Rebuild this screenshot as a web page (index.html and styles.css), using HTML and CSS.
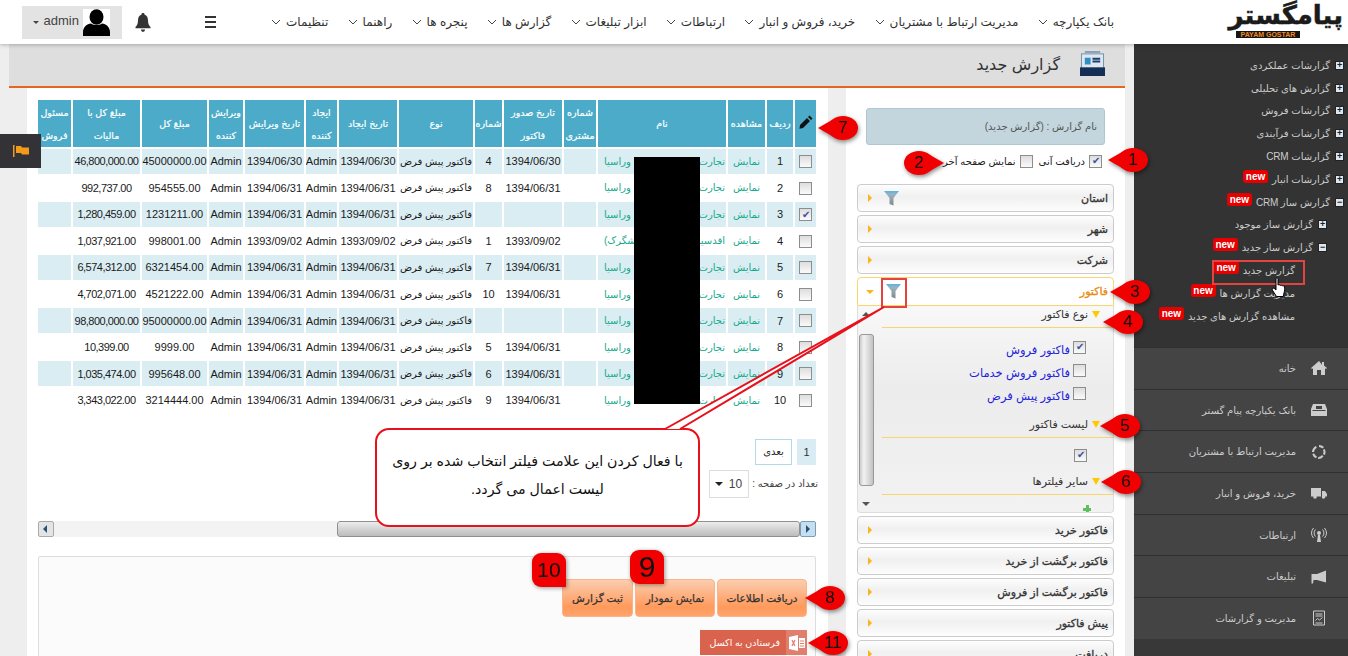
FILE: index.html
```html
<!DOCTYPE html>
<html lang="fa" dir="rtl">
<head>
    <meta charset="UTF-8">
    <title>گزارش جدید</title>
    <link rel="stylesheet" href="styles.css">
</head>
<body>
    <header class="topbar">
        <div class="logo">
            <span class="logo-fa">پیامگستر</span>
            <span class="logo-en">PAYAM GOSTAR</span>
        </div>
        <nav class="nav">
            <a>بانک یکپارچه<svg viewBox="0 0 10 6"><path d="M1 1l4 4 4-4"/></svg></a>
            <a>مدیریت ارتباط با مشتریان<svg viewBox="0 0 10 6"><path d="M1 1l4 4 4-4"/></svg></a>
            <a>خرید، فروش و انبار<svg viewBox="0 0 10 6"><path d="M1 1l4 4 4-4"/></svg></a>
            <a>ارتباطات<svg viewBox="0 0 10 6"><path d="M1 1l4 4 4-4"/></svg></a>
            <a>ابزار تبلیغات<svg viewBox="0 0 10 6"><path d="M1 1l4 4 4-4"/></svg></a>
            <a>گزارش ها<svg viewBox="0 0 10 6"><path d="M1 1l4 4 4-4"/></svg></a>
            <a>پنجره ها<svg viewBox="0 0 10 6"><path d="M1 1l4 4 4-4"/></svg></a>
            <a>راهنما<svg viewBox="0 0 10 6"><path d="M1 1l4 4 4-4"/></svg></a>
            <a>تنظیمات<svg viewBox="0 0 10 6"><path d="M1 1l4 4 4-4"/></svg></a>
        </nav>
        <div class="burger"><i></i><i></i><i></i></div>
        <svg class="bell" viewBox="0 0 16 19"><path d="M8 0c1 0 1.600.7 1.600 1.700 2.400.8 3.400 3 3.400 5.500 0 3.300.8 5 2.500 6.800v1.300H.5V14C2.200 12.200 3 10.500 3 7.200c0-2.500 1-4.700 3.400-5.500C6.400.7 7 0 8 0z"/><path d="M6 16.500h4c0 1.400-.9 2.300-2 2.300s-2-.9-2-2.300z"/></svg>
        <div class="user">
            <svg class="avatar" viewBox="0 0 27 27"><rect width="27" height="27" fill="#fff"/><ellipse cx="13.500" cy="8" rx="7" ry="7.800"/><path d="M0 27v-4c0-5 4-8 8-8.500 3 2 8 2 11 0 4 .5 8 3.500 8 8.500v4z"/></svg>
            <span class="user-name" dir="ltr">admin</span>
            <i class="caret"></i>
        </div>
    </header>

    <div class="layout">
        <aside class="sidebar">
            <ul class="tree">
                <li><i class="node">+</i>گزارشات عملکردی</li>
                <li><i class="node">+</i>گزارش های تحلیلی</li>
                <li><i class="node">+</i>گزارشات فروش</li>
                <li><i class="node">+</i>گزارشات فرآیندی</li>
                <li><i class="node">+</i>گزارشات CRM</li>
                <li><i class="node">+</i>گزارشات انبار<b class="new">new</b></li>
                <li><i class="node">−</i>گزارش ساز CRM<b class="new">new</b></li>
                <li class="lvl2"><i class="node">+</i>گزارش ساز موجود</li>
                <li class="lvl2"><i class="node">−</i>گزارش ساز جدید<b class="new">new</b></li>
                <li class="lvl3">گزارش جدید<b class="new">new</b></li>
                <li class="lvl3">مدیریت گزارش ها<b class="new">new</b></li>
                <li class="lvl3">مشاهده گزارش های جدید<b class="new">new</b></li>
            </ul>
            <ul class="menu">
                <li><svg viewBox="0 0 16 16"><path d="M8 1L0 8l1 1 1-.8V15h4v-5h4v5h4V8.200l1 .8 1-1-3-2.600V2h-2v2.700z"/></svg>خانه</li>
                <li><svg viewBox="0 0 16 16"><path d="M2 2h12l2 5v7H0V7zM1.500 8v1h13V8z"/><rect x="5" y="4" width="6" height="3" fill="#444"/></svg>بانک یکپارچه پیام گستر</li>
                <li><svg viewBox="0 0 16 16"><path d="M8 1a7 7 0 0 1 5 2l-1.500 1.500A5 5 0 0 0 8 3zM13.800 5A7 7 0 0 1 14 11l-2-.8a5 5 0 0 0 0-4.400zM12.500 12.500A7 7 0 0 1 7 15l.3-2a5 5 0 0 0 3.700-2zM5 14.300A7 7 0 0 1 1.200 10l2-.6a5 5 0 0 0 2.700 3zM1 8a7 7 0 0 1 4-6l.8 1.800A5 5 0 0 0 3 8z"/></svg>مدیریت ارتباط با مشتریان</li>
                <li><svg viewBox="0 0 16 16"><path d="M0 3h10v8.500H0zM11 6h3l2 3v2.500h-5z"/><circle cx="4" cy="12" r="1.800"/><circle cx="12.500" cy="12" r="1.800"/></svg>خرید، فروش و انبار</li>
                <li><svg viewBox="0 0 16 16"><circle cx="8" cy="6" r="2"/><path d="M7 8h2l1 7H6z"/><path class="line" d="M4.500 2.500a5 5 0 0 0 0 7M11.500 2.500a5 5 0 0 1 0 7M2.500 1a8 8 0 0 0 0 10M13.500 1a8 8 0 0 1 0 10"/></svg>ارتباطات</li>
                <li><svg viewBox="0 0 16 16"><path d="M15 1.500v12L6 11H2.500L2 14.500H.5V5H6z"/></svg>تبلیغات</li>
                <li><svg viewBox="0 0 16 16"><path class="line" d="M2.500 1h11v14h-11zM4.500 4h7M4.500 6h7M4.500 10.500l2-2 2 1.500 3-2.500M4.500 13h7"/></svg>مدیریت و گزارشات</li>
            </ul>
        </aside>

        <main class="main">
            <div class="title">
                <svg viewBox="0 0 26 26"><rect x="5" y="0" width="16" height="2" fill="#8b9fb4"/><rect x="1.500" y="3" width="23" height="15" fill="#dfe8f0" stroke="#6d90ac"/><rect x="5" y="7" width="6" height="7" fill="#2f8fc4"/><path d="M13 8h8M13 11h8" stroke="#1c3f6b" stroke-width="2"/><rect x="0" y="17" width="26" height="9" fill="#142e56"/></svg>
                <h1>گزارش جدید</h1>
            </div>
            <div class="content">
                <section class="filters">
                    <div class="report-name">نام گزارش : (گزارش جدید)</div>
                    <div class="check-row">
                        <input type="checkbox" class="chk" checked><label>دریافت آنی</label>
                        <input type="checkbox" class="chk"><label>نمایش صفحه آخر</label>
                    </div>
                    <div class="acc">استان<svg class="funnel" viewBox="0 0 15 15"><use href="#funnel"/></svg><i class="arrow"></i></div>
                    <div class="acc">شهر<i class="arrow"></i></div>
                    <div class="acc">شرکت<i class="arrow"></i></div>
                    <div class="acc open">فاکتور<svg class="funnel" viewBox="0 0 15 15"><use href="#funnel"/></svg><i class="arrow"></i></div>
                    <div class="acc-body">
                        <div class="acc-inner">
                            <h3 class="sec">نوع فاکتور</h3>
                            <ul class="opts">
                                <li><input type="checkbox" class="chk" checked>فاکتور فروش</li>
                                <li><input type="checkbox" class="chk">فاکتور فروش خدمات</li>
                                <li><input type="checkbox" class="chk">فاکتور پیش فرض</li>
                            </ul>
                            <h3 class="sec">لیست فاکتور</h3>
                            <div class="list-check"><input type="checkbox" class="chk" checked></div>
                            <h3 class="sec">سایر فیلترها</h3>
                            <div class="plus"></div>
                        </div>
                        <div class="vscroll"><i class="up"></i><span class="vthumb"></span><i class="down"></i></div>
                    </div>
                    <div class="acc">فاکتور خرید<i class="arrow"></i></div>
                    <div class="acc">فاکتور برگشت از خرید<i class="arrow"></i></div>
                    <div class="acc">فاکتور برگشت از فروش<i class="arrow"></i></div>
                    <div class="acc">پیش فاکتور<i class="arrow"></i></div>
                    <div class="acc">دریافت<i class="arrow"></i></div>
                </section>

                <section class="report">
                    <div class="table-wrap">
                        <table class="grid">
                            <colgroup>
                                <col class="c21"><col class="c26"><col class="c37"><col class="c128"><col class="c32"><col class="c58"><col class="c27"><col class="c74"><col class="c58"><col class="c31"><col class="c59"><col class="c34"><col class="c65"><col class="c67"><col class="c33">
                            </colgroup>
                            <thead>
                                <tr>
                                    <th><svg class="pencil" viewBox="0 0 14 14"><path d="M10.500.5l3 3-1.500 1.500-3-3zM8 3l3 3-7 7-3.500.800L1 10z"/></svg></th>
                                    <th>ردیف</th><th>مشاهده</th><th>نام</th><th>شماره مشتری</th><th>تاریخ صدور فاکتور</th><th>شماره</th><th>نوع</th><th>تاریخ ایجاد</th><th>ایجاد کننده</th><th>تاریخ ویرایش</th><th>ویرایش کننده</th><th>مبلغ کل</th><th>مبلغ کل با<br>مالیات</th><th>مسئول فروش</th>
                                </tr>
                            </thead>
                            <tbody>
                                <tr><td><input type="checkbox" class="chk"></td><td>1</td><td class="link">نمایش</td><td class="link"><div class="name"><span>تجارت</span><span>وراسیا</span></div></td><td></td><td>1394/06/30</td><td>4</td><td class="kind">فاکتور پیش فرض</td><td>1394/06/30</td><td>Admin</td><td>1394/06/30</td><td>Admin</td><td>45000000.00</td><td class="tax">46,800,000.00</td><td></td></tr>
                                <tr><td><input type="checkbox" class="chk"></td><td>2</td><td class="link">نمایش</td><td class="link"><div class="name"><span>تجارت</span><span>وراسیا</span></div></td><td></td><td>1394/06/31</td><td>8</td><td class="kind">فاکتور پیش فرض</td><td>1394/06/31</td><td>Admin</td><td>1394/06/31</td><td>Admin</td><td>954555.00</td><td class="tax">992,737.00</td><td></td></tr>
                                <tr><td><input type="checkbox" class="chk" checked></td><td>3</td><td class="link">نمایش</td><td class="link"><div class="name"><span>تجارت</span><span>وراسیا</span></div></td><td></td><td></td><td></td><td class="kind">فاکتور پیش فرض</td><td>1394/06/31</td><td>Admin</td><td>1394/06/31</td><td>Admin</td><td>1231211.00</td><td class="tax">1,280,459.00</td><td></td></tr>
                                <tr><td><input type="checkbox" class="chk"></td><td>4</td><td class="link">نمایش</td><td class="link"><div class="name"><span>اقدسیه</span><span>لشگرک)</span></div></td><td></td><td>1393/09/02</td><td>1</td><td class="kind">فاکتور پیش فرض</td><td>1393/09/02</td><td>Admin</td><td>1393/09/02</td><td>Admin</td><td>998001.00</td><td class="tax">1,037,921.00</td><td></td></tr>
                                <tr><td><input type="checkbox" class="chk"></td><td>5</td><td class="link">نمایش</td><td class="link"><div class="name"><span>تجارت</span><span>وراسیا</span></div></td><td></td><td>1394/06/31</td><td>7</td><td class="kind">فاکتور پیش فرض</td><td>1394/06/31</td><td>Admin</td><td>1394/06/31</td><td>Admin</td><td>6321454.00</td><td class="tax">6,574,312.00</td><td></td></tr>
                                <tr><td><input type="checkbox" class="chk"></td><td>6</td><td class="link">نمایش</td><td class="link"><div class="name"><span>تجارت</span><span>وراسیا</span></div></td><td></td><td>1394/06/31</td><td>10</td><td class="kind">فاکتور پیش فرض</td><td>1394/06/31</td><td>Admin</td><td>1394/06/31</td><td>Admin</td><td>4521222.00</td><td class="tax">4,702,071.00</td><td></td></tr>
                                <tr><td><input type="checkbox" class="chk"></td><td>7</td><td class="link">نمایش</td><td class="link"><div class="name"><span>تجارت</span><span>وراسیا</span></div></td><td></td><td></td><td></td><td class="kind">فاکتور پیش فرض</td><td>1394/06/31</td><td>Admin</td><td>1394/06/31</td><td>Admin</td><td>95000000.00</td><td class="tax">98,800,000.00</td><td></td></tr>
                                <tr><td><input type="checkbox" class="chk"></td><td>8</td><td class="link">نمایش</td><td class="link"><div class="name"><span>تجارت</span><span>وراسیا</span></div></td><td></td><td>1394/06/31</td><td>5</td><td class="kind">فاکتور پیش فرض</td><td>1394/06/31</td><td>Admin</td><td>1394/06/31</td><td>Admin</td><td>9999.00</td><td class="tax">10,399.00</td><td></td></tr>
                                <tr><td><input type="checkbox" class="chk"></td><td>9</td><td class="link">نمایش</td><td class="link"><div class="name"><span>تجارت</span><span>وراسیا</span></div></td><td></td><td>1394/06/31</td><td>6</td><td class="kind">فاکتور پیش فرض</td><td>1394/06/31</td><td>Admin</td><td>1394/06/31</td><td>Admin</td><td>995648.00</td><td class="tax">1,035,474.00</td><td></td></tr>
                                <tr><td><input type="checkbox" class="chk"></td><td>10</td><td class="link">نمایش</td><td class="link"><div class="name"><span>تجارت</span><span>وراسیا</span></div></td><td></td><td>1394/06/31</td><td>9</td><td class="kind">فاکتور پیش فرض</td><td>1394/06/31</td><td>Admin</td><td>1394/06/31</td><td>Admin</td><td>3214444.00</td><td class="tax">3,343,022.00</td><td></td></tr>
                            </tbody>
                        </table>
                    </div>

                    <div class="pager">
                        <span class="page-num">1</span>
                        <span class="page-next">بعدی</span>
                    </div>
                    <div class="page-size">
                        <span>تعداد در صفحه :</span>
                        <div class="size-select"><span>10</span><i></i></div>
                    </div>

                    <div class="hscroll">
                        <span class="hbtn right"></span>
                        <span class="hthumb"></span>
                        <span class="htrack"></span>
                        <span class="hbtn left"></span>
                    </div>

                    <div class="actions">
                        <div class="btns">
                            <button>دریافت اطلاعات</button>
                            <button>نمایش نمودار</button>
                            <button>ثبت گزارش</button>
                        </div>
                        <div class="excel">
                            <span class="excel-ico"><svg viewBox="0 0 16 16"><path d="M0 2l9-2v16l-9-2zM10 3h6v10h-6z" fill="#fff"/><path d="M3 5l3 6M6 5l-3 6" stroke="#e07f6d" stroke-width="1.300"/><path d="M11 6h4M11 8.500h4M11 11h4" stroke="#e07f6d"/></svg></span>
                            <span class="excel-text">فرستادن به اکسل</span>
                        </div>
                    </div>
                </section>
            </div>
        </main>
    </div>

    <svg class="defs" width="0" height="0">
        <defs>
            <linearGradient id="fg" x1="0" y1="0" x2="0" y2="1"><stop offset="0" stop-color="#55b4e6"/><stop offset=".25" stop-color="#9fb2bd"/><stop offset="1" stop-color="#7f8a90"/></linearGradient>
            <path id="funnel" d="M0 0h15L9.500 7v7.500l-4-1.500V7z" fill="url(#fg)"/>
        </defs>
    </svg>

    <!-- annotations on top of the screenshot -->
    <div class="flag-tab"><svg viewBox="0 0 16 12"><path d="M0 0h1.500v12H0zM3 1h5l1 1.500h7v7H9l-1-1.500H3z"/></svg></div>
    <div class="redact"></div>
    <div class="mark box-tree"></div>
    <div class="mark box-funnel"></div>
    <svg class="hand" viewBox="0 0 16 21"><path d="M5 1.500c.8-.8 2-.5 2 .8V8l1-.3c.8 0 1.200.3 1.500.7.800-.5 1.700-.2 2 .5.800-.3 1.700 0 2 1 .3 1.500.2 4-.5 6l-.8 3.600H5.500L1.300 13c-.7-1.200.7-2.500 2-1.500L5 13z" fill="#fff" stroke="#000"/></svg>
    <svg class="tail" viewBox="0 0 1348 656"><polyline points="665,429 884,307 680,429" fill="#fff" stroke="#e8101a" stroke-width="2"/></svg>
    <div class="bubble"><p>با فعال کردن این علامت فیلتر انتخاب شده بر روی<br>لیست اعمال می گردد.</p></div>
    <div class="co to-left n1" dir="ltr">1</div>
    <div class="co to-right n2" dir="ltr">2</div>
    <div class="co to-left n3" dir="ltr">3</div>
    <div class="co to-left n4" dir="ltr">4</div>
    <div class="co to-left n5" dir="ltr">5</div>
    <div class="co to-left n6" dir="ltr">6</div>
    <div class="co to-left n7" dir="ltr">7</div>
    <div class="co to-left n8" dir="ltr">8</div>
    <div class="co to-left n11" dir="ltr">11</div>
    <div class="sq n9" dir="ltr">9</div>
    <div class="sq n10" dir="ltr">10</div>
</body>
</html>
```

FILE: styles.css
```css
* {
    margin: 0;
    padding: 0;
    box-sizing: border-box;
}
html, body {
    width: 1348px;
    height: 656px;
    overflow: hidden;
}
body {
    position: relative;
    font-family: "Liberation Sans", "DejaVu Sans", sans-serif;
    font-size: 11px;
    color: #222;
    background: #eee;
}
ul {
    list-style: none;
}
i {
    font-style: normal;
}

/* top bar */
.topbar {
    position: relative;
    z-index: 2;
    display: flex;
    align-items: center;
    height: 44px;
    background: #fff;
    box-shadow: 0 1px 4px rgba(0, 0, 0, .25);
}
.logo {
    position: relative;
    width: 234px;
    height: 44px;
    padding-right: 5px;
    flex: none;
}
.logo-fa {
    display: block;
    height: 30px;
    font-family: "DejaVu Sans", sans-serif;
    font-size: 26px;
    font-weight: bold;
    line-height: 30px;
    color: #1b1b1b;
    white-space: nowrap;
    -webkit-text-stroke: .5px #1b1b1b;
}
.logo-en {
    position: absolute;
    right: 48px;
    top: 31px;
    width: 64px;
    background: #161616;
    color: #f08a24;
    font-size: 7px;
    font-weight: bold;
    line-height: 7px;
    text-align: center;
    white-space: nowrap;
}
.nav {
    display: flex;
    justify-content: space-between;
    width: 843px;
    flex: none;
}
.nav a {
    display: flex;
    align-items: center;
    gap: 5px;
    color: #333;
    font-size: 12px;
    white-space: nowrap;
}
.nav svg {
    width: 10px;
    height: 6px;
    fill: none;
    stroke: #444;
}
.burger {
    display: flex;
    flex-direction: column;
    gap: 3px;
    width: 11px;
    margin-right: 55px;
}
.burger i {
    height: 2px;
    background: #333;
}
.bell {
    width: 16px;
    height: 19px;
    margin-right: 54px;
    fill: #333;
}
.user {
    display: flex;
    align-items: center;
    width: 100px;
    height: 33px;
    margin-right: 13px;
    padding-right: 12px;
    background: #e3e3e3;
    font-size: 13px;
    color: #444;
}
.user-name {
    margin-bottom: 3px;
}
.avatar {
    width: 27px;
    height: 27px;
    margin-left: 4px;
}
.caret {
    margin-right: 5px;
    border: 3px solid transparent;
    border-top: 3px solid #444;
    border-bottom: 0;
}

/* layout */
.layout {
    display: flex;
    height: 612px;
}
.sidebar {
    width: 214px;
    flex: none;
    background: #383838;
    color: #ccc;
}
.main {
    width: 1116px;
    margin-right: 9px;
    flex: none;
}

/* sidebar tree */
.tree {
    height: 303px;
    padding-top: 10px;
    background: #333;
    font-size: 10px;
    letter-spacing: -.2px;
}
.tree li {
    display: flex;
    align-items: center;
    height: 22.8px;
    padding-right: 4px;
    white-space: nowrap;
}
.tree li.lvl2 {
    padding-right: 21px;
}
.tree li.lvl3 {
    padding-right: 53px;
}
.node {
    width: 9px;
    height: 9px;
    margin-left: 5px;
    background: #dfe6ec;
    border: 1px solid #222;
    color: #123;
    font-size: 9px;
    font-weight: bold;
    line-height: 7px;
    text-align: center;
}
.new {
    display: block;
    width: 25px;
    height: 13px;
    margin: 0 4px 6px 0;
    background: #e60000;
    border-radius: 3px;
    color: #fff;
    font-size: 10px;
    letter-spacing: 0;
    line-height: 13px;
    text-align: center;
}

/* sidebar menu */
.menu li {
    display: flex;
    align-items: center;
    gap: 15px;
    height: 41.7px;
    padding-right: 21px;
    background: #444;
    border-top: 1px solid #2d3136;
    white-space: nowrap;
    font-size: 10px;
    letter-spacing: -.1px;
}
.menu svg {
    width: 16px;
    height: 16px;
    fill: #ccc;
    flex: none;
}
.menu .line {
    fill: none;
    stroke: #ccc;
}

/* title */
.title {
    display: flex;
    align-items: center;
    gap: 20px;
    height: 44px;
    padding: 0 20px 2px 0;
    background: #dedede;
    border-bottom: 2px solid #e5671f;
}
.title svg {
    width: 25px;
    height: 25px;
    margin-bottom: 2px;
}
.title h1 {
    font-size: 16px;
    font-weight: normal;
    color: #333;
}
.content {
    display: flex;
    gap: 18px;
    padding-left: 18px;
}

/* filters column */
.filters {
    width: 279px;
    height: 568px;
    flex: none;
    padding: 20px 11px 0 11px;
    background: #fff;
    overflow: hidden;
}
.report-name {
    display: flex;
    align-items: center;
    height: 37px;
    margin: 0 9px 0 9px;
    padding-right: 7px;
    background: #c3d6dd;
    border: 1px solid #aec8d2;
    border-radius: 3px;
    color: #555;
    font-size: 10px;
}
.check-row {
    display: flex;
    align-items: center;
    height: 22px;
    margin: 5px 0 12px;
    padding-right: 12px;
    color: #222;
    font-size: 10px;
}
.check-row label {
    margin: 0 4px 0 6px;
}
.chk {
    appearance: none;
    display: inline-flex;
    align-items: center;
    justify-content: center;
    width: 13px;
    height: 13px;
    flex: none;
    background: linear-gradient(#ddd, #fafafa);
    border: 1px solid #8d8d8d;
}
.chk:checked::after {
    content: "✔";
    font-size: 10px;
    line-height: 10px;
    color: #3b4fa0;
}
.acc {
    display: flex;
    align-items: center;
    height: 28px;
    margin-bottom: 3px;
    padding-right: 5px;
    background: linear-gradient(#fdfdfd, #f0f0f0 45%, #fdfdfd);
    border: 1px solid #ccc;
    border-radius: 4px;
    font-size: 11px;
    color: #333;
    -webkit-text-stroke: .3px;
}
.arrow {
    margin-right: auto;
    margin-left: 10px;
    border: 4px solid transparent;
    border-left: 4px solid #f8b51c;
    border-right: 0;
}
.funnel {
    width: 15px;
    height: 15px;
    margin-right: auto;
}
.funnel + .arrow {
    margin-right: 12px;
}
.acc.open {
    height: 29px;
    margin-bottom: 0;
    background: #fff;
    border-color: #fad46f;
    border-radius: 4px 4px 0 0;
    color: #e88a10;
}
.acc.open .arrow {
    margin-left: 8px;
    border: 4px solid transparent;
    border-top: 4px solid #f8b51c;
    border-bottom: 0;
}
.acc-body {
    display: flex;
    height: 207px;
    margin-bottom: 3px;
    background: linear-gradient(#f8f8f8, #ececec 40%, #f2f2f2);
    border: 1px solid #ddd;
    border-top: 0;
    border-radius: 0 0 4px 4px;
    overflow: hidden;
}
.acc-inner {
    flex: 1;
    margin-left: 8px;
}
.sec {
    display: flex;
    align-items: center;
    gap: 4px;
    height: 22px;
    padding: 0 13px 4px 0;
    border-bottom: 1px solid #fad46f;
    font-size: 11px;
    font-weight: normal;
    color: #333;
}
.sec::before {
    content: "";
    border: 4px solid transparent;
    border-top: 7px solid #ffc800;
    border-bottom: 0;
}
.opts {
    height: 88px;
    padding: 10px 27px 0 0;
}
.opts li {
    display: flex;
    align-items: center;
    gap: 3px;
    height: 23px;
    font-size: 11.5px;
    color: #2323dd;
}
.opts .chk {
    margin-bottom: 5px;
}
.list-check {
    height: 35px;
    padding: 10px 26px 0 0;
}
.plus {
    width: 8px;
    height: 8px;
    margin: 10px 22px 0 0;
    background: linear-gradient(#5fbf5f, #5fbf5f) center / 8px 3px no-repeat, linear-gradient(#5fbf5f, #5fbf5f) center / 3px 8px no-repeat;
}
.vscroll {
    position: relative;
    width: 16px;
    flex: none;
}
.vscroll .up, .vscroll .down {
    position: absolute;
    left: 4px;
    border: 4px solid transparent;
}
.vscroll .up {
    top: 6px;
    border-bottom: 4px solid #555;
    border-top: 0;
}
.vscroll .down {
    bottom: 6px;
    border-top: 4px solid #555;
    border-bottom: 0;
}
.vthumb {
    position: absolute;
    top: 28px;
    left: 1px;
    width: 15px;
    height: 152px;
    background: linear-gradient(90deg, #ccc, #f2f2f2 30%, #c2c2c2);
    border: 1px solid #999;
    border-radius: 3px;
}

/* report column */
.report {
    width: 801px;
    height: 568px;
    flex: none;
    padding: 12px 12px 0 11px;
    background: #fff;
    overflow: hidden;
}
.table-wrap {
    height: 335px;
    margin-bottom: 6px;
}
.grid {
    table-layout: fixed;
    width: 782px;
    margin: -2px -2px 0;
    border-collapse: separate;
    border-spacing: 2px;
    font-size: 11px;
    color: #1a1a1a;
}
.c21 { width: 21px; }
.c26 { width: 26px; }
.c37 { width: 37px; }
.c128 { width: 128px; }
.c32 { width: 32px; }
.c58 { width: 58px; }
.c27 { width: 27px; }
.c74 { width: 74px; }
.c31 { width: 31px; }
.c59 { width: 59px; }
.c34 { width: 34px; }
.c65 { width: 65px; }
.c67 { width: 67px; }
.c33 { width: 33px; }
.grid th {
    height: 47px;
    padding: 0;
    background: #4babc8;
    color: #fff;
    font-size: 9.5px;
    font-weight: normal;
    line-height: 23px;
    -webkit-text-stroke: .2px;
}
.grid td {
    height: 24.55px;
    padding: 0;
    text-align: center;
    white-space: nowrap;
    overflow: hidden;
}
.grid tbody tr:nth-child(odd) td {
    background: #daedf3;
}
.grid .chk {
    vertical-align: middle;
}
.grid .link {
    color: #17a98c;
    font-size: 10px;
}
.grid .kind {
    font-size: 10px;
}
.grid .tax {
    letter-spacing: -.5px;
}
.name {
    display: flex;
    justify-content: space-between;
    padding: 0 1px 0 6px;
}
.pencil {
    width: 14px;
    height: 14px;
    margin-top: 4px;
    fill: #111;
}

/* pager */
.pager {
    display: flex;
    gap: 5px;
    height: 26px;
}
.page-num {
    width: 19px;
    background: #d9ebf3;
    color: #333;
    line-height: 26px;
    text-align: center;
}
.page-next {
    width: 37px;
    border: 1px solid #b3dbe7;
    font-size: 10px;
    line-height: 24px;
    text-align: center;
}
.page-size {
    display: flex;
    align-items: center;
    gap: 3px;
    height: 27px;
    margin: 5px -2px 0 0;
    color: #444;
    font-size: 10px;
}
.size-select {
    display: flex;
    align-items: center;
    justify-content: space-between;
    width: 40px;
    height: 28px;
    padding: 0 6px 0 5px;
    border: 1px solid #ddd;
    font-size: 12px;
}
.size-select i {
    border: 4px solid transparent;
    border-top: 4px solid #222;
    border-bottom: 0;
}
.hscroll {
    display: flex;
    height: 16px;
    margin-top: 24px;
}
.hbtn {
    position: relative;
    width: 16px;
    background: #c6dff0;
    border: 1px solid #7d9db5;
    border-radius: 2px;
}
.hbtn::after {
    content: "";
    position: absolute;
    top: 3px;
    border: 4px solid transparent;
}
.hbtn.right::after {
    left: 5px;
    border-left: 4px solid #24527a;
    border-right: 0;
}
.hbtn.left {
    background: #e4e4e4;
    border-color: #aaa;
}
.hbtn.left::after {
    left: 4px;
    border-right: 4px solid #24527a;
    border-left: 0;
}
.hthumb {
    width: 463px;
    background: linear-gradient(#ececec, #bcbcbc);
    border: 1px solid #909090;
    border-radius: 3px;
}
.htrack {
    flex: 1;
    background: #f3f3f3;
}
.actions {
    height: 110px;
    margin-top: 19px;
    padding: 22px 8px 0 0;
    background: #fbfbfb;
    border: 1px solid #ddd;
    border-radius: 2px;
}
.btns {
    display: flex;
    gap: 2px;
}
.btns button {
    height: 38px;
    padding: 0;
    background: linear-gradient(#fbcdb0, #ff9a5c 75%, #ffa46d);
    border: 1px solid #f9b48a;
    border-radius: 4px;
    font-family: inherit;
    font-size: 10.5px;
    white-space: nowrap;
    color: #333;
    -webkit-text-stroke: .25px;
}
.btns button:nth-child(1) { width: 90px; }
.btns button:nth-child(2) { width: 80px; }
.btns button:nth-child(3) { width: 71px; }
.excel {
    display: flex;
    align-items: center;
    width: 107px;
    height: 25px;
    margin-top: 13px;
    background: #d9634c;
    color: #fff;
}
.excel-ico {
    display: flex;
    align-items: center;
    justify-content: center;
    width: 21px;
    height: 100%;
    background: #e07f6d;
}
.excel-ico svg {
    width: 16px;
    height: 16px;
}
.excel-text {
    padding-right: 6px;
    font-size: 9.5px;
    white-space: nowrap;
}

/* annotations */
.defs {
    position: absolute;
}
.flag-tab {
    position: absolute;
    left: 0;
    top: 134px;
    z-index: 3;
    display: flex;
    align-items: center;
    justify-content: center;
    width: 41px;
    height: 34px;
    background: #333337;
}
.flag-tab svg {
    width: 16px;
    height: 12px;
    fill: #f49a1a;
}
.redact {
    position: absolute;
    left: 634px;
    top: 157px;
    z-index: 3;
    width: 66px;
    height: 247px;
    background: #000;
}
.mark {
    position: absolute;
    z-index: 4;
    border: 2px solid #e5433f;
}
.box-tree {
    left: 1212px;
    top: 260px;
    width: 93px;
    height: 25px;
}
.box-funnel {
    left: 881px;
    top: 278px;
    width: 26px;
    height: 30px;
}
.hand {
    position: absolute;
    left: 1271px;
    top: 277px;
    z-index: 5;
    width: 16px;
    height: 21px;
}
.tail {
    position: absolute;
    left: 0;
    top: 0;
    z-index: 6;
    width: 1348px;
    height: 656px;
    pointer-events: none;
}
.bubble {
    position: absolute;
    left: 375px;
    top: 428px;
    z-index: 5;
    display: flex;
    align-items: center;
    justify-content: center;
    width: 325px;
    height: 99px;
    padding: 0 0 6px;
    background: #fff;
    border: 2px solid #e8101a;
    border-radius: 14px;
    font-size: 14.2px;
    line-height: 28px;
    text-align: center;
    white-space: nowrap;
    color: #111;
}
.co {
    position: absolute;
    z-index: 7;
    width: 30px;
    height: 24px;
    background: #f00000;
    border-radius: 50%;
    filter: drop-shadow(1px 2px 2px rgba(0, 0, 0, .45));
    font-size: 17px;
    line-height: 24px;
    text-align: center;
    color: #111;
}
.co::before {
    content: "";
    position: absolute;
    top: 4px;
    border: 8px solid transparent;
}
.co.to-left::before {
    left: -10px;
    border-right: 14px solid #f00000;
    border-left: 0;
}
.co.to-right::before {
    right: -10px;
    border-left: 14px solid #f00000;
    border-right: 0;
}
.n1 { left: 1118px; top: 148px; }
.n2 { left: 904px; top: 151px; }
.n3 { left: 1120px; top: 280px; }
.n4 { left: 1113px; top: 310px; }
.n5 { left: 1110px; top: 414px; }
.n6 { left: 1111px; top: 470px; }
.n7 { left: 828px; top: 116px; }
.n8 { left: 815px; top: 586px; }
.n11 { left: 818px; top: 631px; }
.sq {
    position: absolute;
    z-index: 7;
    width: 34px;
    height: 34px;
    background: #f00000;
    border-radius: 9px 9px 0 9px;
    filter: drop-shadow(1px 1px 2px rgba(0, 0, 0, .4));
    font-size: 21px;
    line-height: 34px;
    text-align: center;
    color: #111;
}
.n9 { left: 630px; top: 550px; font-size: 30px; }
.n10 { left: 532px; top: 553px; }
```
